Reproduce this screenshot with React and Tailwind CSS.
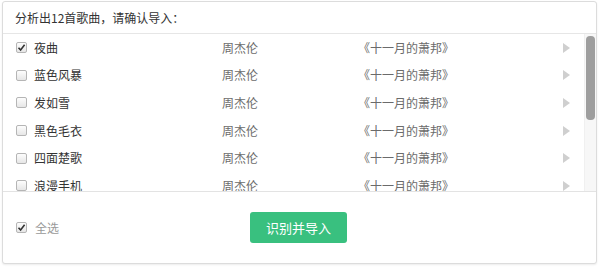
import React from "react";

const songs = ["夜曲", "蓝色风暴", "发如雪", "黑色毛衣", "四面楚歌", "浪漫手机"];

function Box({ checked }) {
  return (
    <span className="flex h-[11px] w-[11px] shrink-0 items-center justify-center rounded-[2px] border border-[#b5b5b5] bg-gradient-to-b from-[#fdfdfd] to-[#e6e6e6]">
      {checked && (
        <svg width="9" height="9" viewBox="0 0 9 9">
          <path d="M1.5 4.8 L3.6 7 L7.6 1.8" fill="none" stroke="#333" strokeWidth="1.6" />
        </svg>
      )}
    </span>
  );
}

export default function App() {
  return (
    <div className="h-[267px] w-[600px] bg-white pl-[2px] pt-[1px]" style={{ fontFamily: '"Microsoft YaHei","Noto Sans CJK SC",sans-serif' }}>
      <div className="flex h-[263px] w-[595px] flex-col overflow-hidden rounded-[3px] border border-[#dcdcdc] bg-white shadow-[0_1px_2px_rgba(0,0,0,0.08)]">
        <div className="flex h-[32px] shrink-0 items-center border-b border-[#e6e6e6] pl-[12px] text-[12px] text-[#333]">
          分析出12首歌曲，请确认导入：
        </div>
        <div className="flex h-[158px] shrink-0 border-b border-[#e3e3e3]">
          <div className="flex-1 overflow-hidden">
            {songs.map((s, i) => (
              <div key={s} className="flex h-[27.6px] items-center text-[12px] leading-[16px]">
                <div className="w-[31px] pl-[13px]">
                  <Box checked={i === 0} />
                </div>
                <div className="w-[188px] text-[#333]">{s}</div>
                <div className="w-[136px] text-[#6b6b6b]">周杰伦</div>
                <div className="w-[204px] text-[#6b6b6b]">《十一月的萧邦》</div>
                <svg width="7" height="10" viewBox="0 0 7 10" className="ml-[1px]">
                  <path d="M0 0 L7 5 L0 10 Z" fill="#cfcfcf" />
                </svg>
              </div>
            ))}
          </div>
          <div className="flex w-[12px] shrink-0 flex-col border-l border-[#f0f0f0] bg-[#f7f7f7] px-[1px] pt-[2px]">
            <div className="h-[84px] w-full rounded-[4px] bg-[#9e9e9e]" />
          </div>
        </div>
        <div className="flex flex-1 items-center">
          <div className="flex w-[247px] items-center gap-[8px] pl-[13px] text-[12px] leading-[16px] text-[#999]">
            <Box checked />
            <span>全选</span>
          </div>
          <button className="flex h-[31px] w-[97px] items-center justify-center rounded-[3px] bg-[#39c07f] text-[13px] text-white">
            识别并导入
          </button>
        </div>
      </div>
    </div>
  );
}
